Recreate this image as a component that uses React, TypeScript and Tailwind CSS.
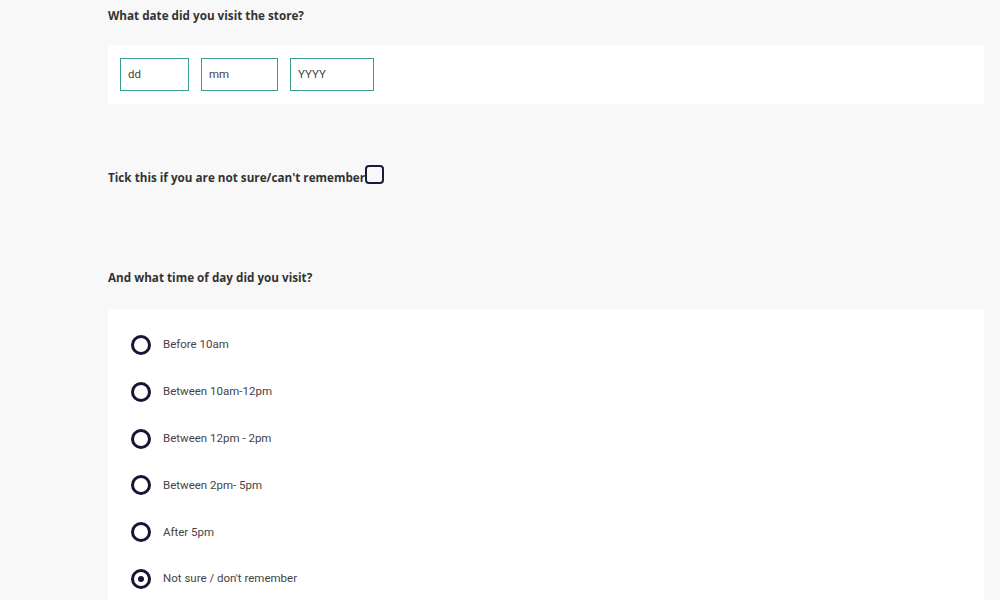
import React from "react";

const options = [
  "Before 10am",
  "Between 10am-12pm",
  "Between 12pm - 2pm",
  "Between 2pm- 5pm",
  "After 5pm",
  "Not sure / don't remember",
];

export default function App() {
  return (
    <div className="min-h-[600px] w-[1000px] bg-[#f8f8f8] overflow-hidden">
      <div className="ml-[108px] w-[876px]">
        <div className="pt-[7px] h-[45px] text-[11.7px] font-bold text-[#333] [font-family:'Open_Sans',sans-serif]">
          What date did you visit the store?
        </div>
        <div className="bg-white h-[59px] flex items-center gap-[12px] pl-[12px] [font-family:Roboto,sans-serif] text-[11.5px] text-[#444]">
          <div className="w-[69px] h-[33px] border border-[#3a9e94] flex items-center pl-[7px]">dd</div>
          <div className="w-[77px] h-[33px] border border-[#3a9e94] flex items-center pl-[7px]">mm</div>
          <div className="w-[84px] h-[33px] border border-[#3a9e94] flex items-center pl-[7px]">YYYY</div>
        </div>
        <div className="mt-[61px] flex items-end text-[11.7px] font-bold text-[#333] [font-family:'Open_Sans',sans-serif]">
          <span className="leading-[17px]">Tick this if you are not sure/can't remember</span>
          <span className="w-[19px] h-[19px] border-2 border-[#1c1c3a] rounded-[4px] mb-[2px] box-border"></span>
        </div>
        <div className="mt-[83px] text-[11.7px] font-bold text-[#333] [font-family:'Open_Sans',sans-serif]">
          And what time of day did you visit?
        </div>
        <div className="mt-[22px] bg-white h-[300px] pt-[13px] pl-[23px] [font-family:Roboto,sans-serif] text-[11.5px] text-[#444]">
          {options.map((o, i) => (
            <div key={o} className="flex items-center h-[46.8px]">
              <span className="w-[20px] h-[20px] rounded-full border-[3px] border-[#151535] flex items-center justify-center box-border">
                {i === 5 && <span className="w-[6px] h-[6px] rounded-full bg-[#151535]"></span>}
              </span>
              <span className="ml-[12px]">{o}</span>
            </div>
          ))}
        </div>
      </div>
    </div>
  );
}
